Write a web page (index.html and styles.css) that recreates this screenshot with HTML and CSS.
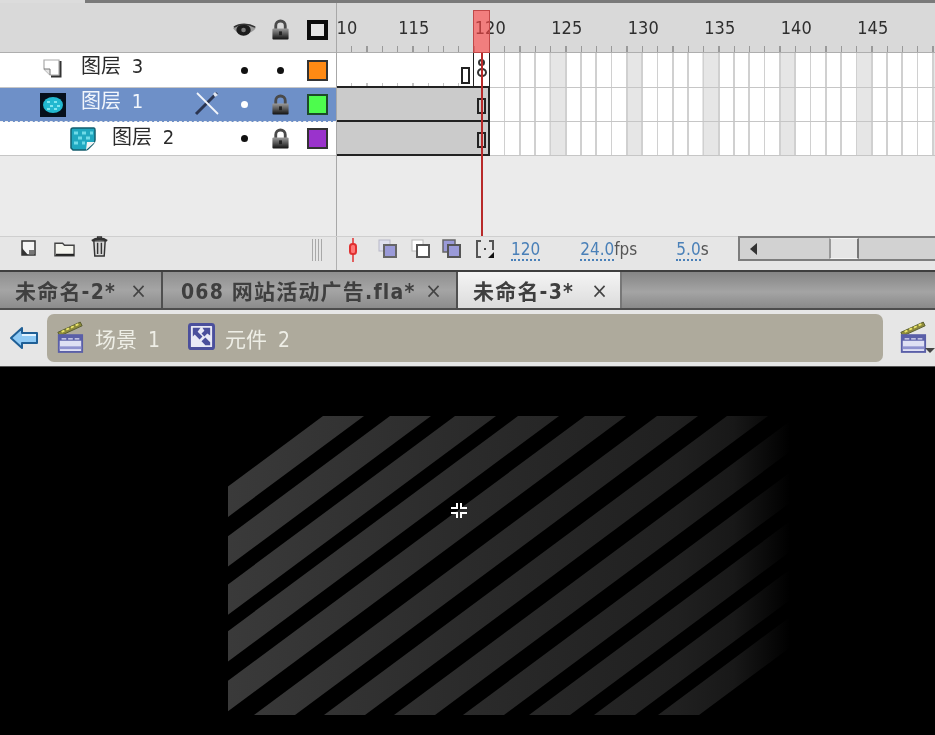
FILE: index.html
```html
<!DOCTYPE html>
<html lang="zh">
<head>
<meta charset="utf-8">
<title>Timeline</title>
<link rel="stylesheet" href="styles.css">
</head>
<body>
<svg class="defs" width="0" height="0" aria-hidden="true">
  <defs>
    <linearGradient id="lockg" x1="0" y1="0" x2="0" y2="1"><stop offset="0" stop-color="#9a9a9a"/><stop offset="1" stop-color="#111"/></linearGradient>
    <symbol id="lock" viewBox="0 0 20 22">
      <path d="M5 11V7a5 5 0 0 1 10 0v4" fill="none" stroke="#4a4a4a" stroke-width="3"/>
      <rect x="1.500" y="10" width="17" height="11.500" rx="1" fill="url(#lockg)"/>
      <rect x="8.500" y="13" width="3" height="4" fill="#222"/>
    </symbol>
    <symbol id="clapper" viewBox="0 0 30 34">
      <path d="M2 12 26 1l2 4L4 16z" fill="#8d8a3c" stroke="#555a2c"/>
      <path d="M6 11.500l3-1.400M11 9.200l3-1.400M16 6.900l3-1.400M21 4.600l3-1.400" stroke="#e9e36a" stroke-width="2"/>
      <rect x="3" y="15" width="25" height="18" fill="#dfe0f4" stroke="#5a5fa8" stroke-width="2"/>
      <rect x="3" y="15" width="25" height="6" fill="#5a5fa8"/>
      <path d="M6 19h5M13 19h5M20 19h5" stroke="#dfe0f4" stroke-width="1.500"/>
      <rect x="4" y="27" width="23" height="3" fill="#8f92cf"/>
    </symbol>
    <symbol id="onion-a" viewBox="0 0 20 20">
      <rect x="1" y="1" width="11" height="11" fill="#dfe0ee" stroke="#b8b8c8"/>
      <rect x="6" y="6" width="12" height="12" fill="#9a9ad8" stroke="#666"  stroke-width="2"/>
    </symbol>
    <symbol id="onion-b" viewBox="0 0 20 20">
      <rect x="1" y="1" width="11" height="11" fill="#fff" stroke="#b8b8b8"/>
      <rect x="6" y="6" width="12" height="12" fill="#fff" stroke="#555" stroke-width="2"/>
    </symbol>
    <symbol id="onion-c" viewBox="0 0 20 20">
      <rect x="1" y="1" width="12" height="12" fill="#9a9ad8" stroke="#666" stroke-width="1.500"/>
      <rect x="6" y="6" width="12" height="12" fill="#9a9ad8" stroke="#555" stroke-width="2"/>
    </symbol>
  </defs>
</svg>

<div class="app">
  <div class="topline"></div>
  <section class="timeline">
    <div class="layers">
      <div class="layer-head">
        <span class="cell">
          <svg class="ico-eye" viewBox="0 0 24 16"><path d="M0 6C5 1 18 0 24 5c-3 7-17 11-24 1z" fill="#9a9a9a"/><ellipse cx="11" cy="8" rx="7.500" ry="6" fill="#1c1c1c"/><circle cx="11" cy="8" r="2.400" fill="#7a7a7a"/><path d="M1 5c6-4 15-4 22 0" fill="none" stroke="#333" stroke-width="1.800"/></svg>
        </span>
        <span class="cell"><svg class="ico-lock"><use href="#lock"/></svg></span>
        <span class="cell"><span class="outline-box"></span></span>
      </div>

      <div class="layer-row first">
        <div class="name-cell ind-mask">
          <svg class="ico-mask" viewBox="0 0 20 20"><path d="M1 2h15v15H7L1 11z" fill="#fff" stroke="#aaa" stroke-width="1.200"/><path d="M1 11h6v6" fill="#e4e4e4" stroke="#777"/><path d="M17.500 3v15.500H8" fill="none" stroke="#333" stroke-width="2"/></svg>
          <span class="lname">图层 3</span>
        </div>
        <span class="cell"><i class="dot"></i></span>
        <span class="cell"><i class="dot"></i></span>
        <span class="cell"><span class="swatch orange"></span></span>
      </div>

      <div class="layer-row active">
        <div class="name-cell ind-masked">
          <svg class="ico-masked" viewBox="0 0 26 24"><rect width="26" height="24" fill="#06101c"/><ellipse cx="13" cy="12" rx="10" ry="8" fill="#22b8d0"/><path d="M7 9h3M14 9h3M10 13h3M17 13h3M7 16h3M14 16h3" stroke="#7fe6f0" stroke-width="2"/></svg>
          <span class="lname">图层 1</span>
          <svg class="ico-pencil" viewBox="0 0 26 26"><path d="M2 24 23 3" stroke="#2b3550" stroke-width="3"/><path d="M21 2l3 3-3 2-2-3z" fill="#dfe6f2"/><path d="M3 3l21 21" stroke="#f3f6fb" stroke-width="1.800"/></svg>
        </div>
        <span class="cell"><i class="dot light"></i></span>
        <span class="cell"><svg class="ico-lock"><use href="#lock"/></svg></span>
        <span class="cell"><span class="swatch green"></span></span>
      </div>

      <div class="layer-row">
        <div class="name-cell ind-child">
          <svg class="ico-child" viewBox="0 0 26 24"><path d="M1 3q0-2 2-2h21q1 0 1 2v10q0 2-2 4l-5 5q-1 1-3 1H3l-2-2z" fill="#20a8c0" stroke="#155e6e" stroke-width="1.500"/><path d="M4 6h4M12 6h4M20 6h3M8 11h4M16 11h4M4 16h4M12 16h3" stroke="#6fdbe8" stroke-width="3"/><path d="M16 23l1-8h8z" fill="#f4f4f4"/></svg>
          <span class="lname">图层 2</span>
        </div>
        <span class="cell"><i class="dot"></i></span>
        <span class="cell"><svg class="ico-lock"><use href="#lock"/></svg></span>
        <span class="cell"><span class="swatch purple"></span></span>
      </div>
      <div class="layer-empty"></div>
    </div>

    <div class="frames">
      <div class="ruler">
        <span class="tick-label shift">110</span>
        <span class="tick-label">115</span>
        <span class="tick-label">120</span>
        <span class="tick-label">125</span>
        <span class="tick-label">130</span>
        <span class="tick-label">135</span>
        <span class="tick-label">140</span>
        <span class="tick-label">145</span>
        <span class="tick-label">150</span>
      </div>
      <div class="frame-row first">
        <div class="span-blank"><i class="kf-empty"></i></div>
        <div class="span-cell"><i class="ring small"></i><i class="ring"></i></div>
      </div>
      <div class="frame-row">
        <div class="span-tween"><i class="kf-end"></i></div>
      </div>
      <div class="frame-row">
        <div class="span-tween"><i class="kf-end"></i></div>
      </div>
      <div class="frames-empty"></div>
      <div class="playhead"><div class="ph-head"></div><div class="ph-line"></div></div>
    </div>
  </section>

  <section class="toolbar">
    <div class="tool-left">
      <svg class="ico-new" viewBox="0 0 18 18"><path d="M2 2h13v14H2z" fill="#f4f4f4" stroke="#333" stroke-width="1.500"/><path d="M2 9l6 7H2z" fill="#333"/><path d="M9 11h5v4H9z" fill="#777"/></svg>
      <svg class="ico-folder" viewBox="0 0 22 16"><path d="M1 2h8l2 2h10v11H1z" fill="#f4f4ee" stroke="#444" stroke-width="1.500"/><path d="M2 14h19" stroke="#222" stroke-width="2"/></svg>
      <svg class="ico-trash" viewBox="0 0 18 22"><path d="M3 5h12l-1 16H4z" fill="#d8d8d8" stroke="#333" stroke-width="1.500"/><path d="M1 5c4-3 12-3 16 0" fill="none" stroke="#333" stroke-width="2.500"/><path d="M7 1h4v2H7zM7 7v12M11 7v12" fill="none" stroke="#333" stroke-width="1.500"/></svg>
      <span class="grip"></span>
    </div>
    <div class="tool-right">
      <svg class="ico-marker" viewBox="0 0 8 24"><path d="M4 0v24" stroke="#e03030" stroke-width="1.500"/><rect x="1" y="6" width="6" height="10" rx="2.500" fill="#f77" stroke="#e03030" stroke-width="2"/></svg>
      <svg class="ico-onion a"><use href="#onion-a"/></svg>
      <svg class="ico-onion b"><use href="#onion-b"/></svg>
      <svg class="ico-onion c"><use href="#onion-c"/></svg>
      <svg class="ico-brackets" viewBox="0 0 20 20"><path d="M6 2H2v16h4M14 2h4v9" fill="none" stroke="#555" stroke-width="2"/><rect x="9" y="9" width="2" height="2" fill="#444"/><path d="M19 13v6h-6z" fill="#111"/></svg>
      <span class="stat s-frame"><b class="val">120</b></span>
      <span class="stat s-fps"><b class="val">24.0</b>fps</span>
      <span class="stat s-time"><b class="val">5.0</b>s</span>
      <div class="hscroll">
        <span class="sc-arrow"></span>
        <span class="sc-thumb"></span>
      </div>
    </div>
  </section>

  <nav class="tabs">
    <div class="tab t1"><span>未命名-2*</span><span class="x">×</span></div>
    <div class="tab t2"><span>068 网站活动广告.fla*</span><span class="x">×</span></div>
    <div class="tab t3 on"><span>未命名-3*</span><span class="x">×</span></div>
  </nav>

  <div class="navbar">
    <svg class="ico-back" viewBox="0 0 28 22"><path d="M12 1 1 11l11 10v-5h15V6H12z" fill="#8fcaf5" stroke="#1f5f96" stroke-width="2" stroke-linejoin="round"/><path d="M12 8h14" stroke="#e4f4ff" stroke-width="2"/></svg>
    <div class="crumbs">
      <svg class="ico-clap"><use href="#clapper"/></svg>
      <span class="crumb">场景 1</span>
      <svg class="ico-symbol" viewBox="0 0 28 28"><rect x="1.500" y="1.500" width="25" height="25" rx="2" fill="#e9e9f6" stroke="#4b4f9c" stroke-width="3"/><path d="M5 5h8l-3 4 5 5-3 3-5-5-2 2zM23 5v8l-3-2-3 3-3-3 3-3-2-3zM14 19l4-4 5 5v3h-5z" fill="#4b4f9c"/></svg>
      <span class="crumb">元件 2</span>
    </div>
    <div class="nav-right">
      <svg class="ico-clap"><use href="#clapper"/></svg>
      <span class="caret"></span>
    </div>
  </div>

  <main class="stage">
    <svg class="canvas" viewBox="0 366 935 369">
      <defs>
        <linearGradient id="fade" gradientUnits="userSpaceOnUse" x1="228" y1="0" x2="790" y2="0">
          <stop offset="0" stop-color="#3a3a3a"/>
          <stop offset=".42" stop-color="#2b2b2b"/>
          <stop offset=".8" stop-color="#202020"/>
          <stop offset=".9" stop-color="#181818"/>
          <stop offset="1" stop-color="#000"/>
        </linearGradient>
        <clipPath id="box"><rect x="228" y="415" width="562" height="299"/></clipPath>
      </defs>
      <g fill="url(#fade)" clip-path="url(#box)">
        <polygon points="323,415 364,415 -39,714 -80,714"/>
        <polygon points="390,415 431,415 28,714 -13,714"/>
        <polygon points="455,415 496,415 93,714 52,714"/>
        <polygon points="518,415 559,415 156,714 115,714"/>
        <polygon points="585,415 626,415 223,714 182,714"/>
        <polygon points="657,415 698,415 295,714 254,714"/>
        <polygon points="727,415 768,415 365,714 324,714"/>
        <polygon points="797,415 838,415 435,714 394,714"/>
        <polygon points="866,415 907,415 504,714 463,714"/>
        <polygon points="932,415 973,415 570,714 529,714"/>
        <polygon points="997,415 1038,415 635,714 594,714"/>
        <polygon points="1061,415 1102,415 699,714 658,714"/>
      </g>
      <path fill="#fff" d="M451 506h5v-4h2v6h-7zM460 502h2v4h5v2h-7zM451 511h7v6h-2v-4h-5zM460 511h7v2h-5v4h-2z"/>
    </svg>
  </main>
</div>
</body>
</html>
```

FILE: styles.css
```css
* { box-sizing: border-box; }
html, body { margin: 0; padding: 0; height: 100%; background: #000; overflow: hidden; }
.defs { position: absolute; }
.app {
  width: 935px;
  height: 735px;
  display: flex;
  flex-direction: column;
  overflow: hidden;
  filter: blur(0.45px);
  font-family: "DejaVu Sans", "Noto Sans CJK SC", sans-serif;
  font-stretch: condensed;
  color: #2a2a2a;
}

.topline {
  height: 3px;
  flex: none;
  background: linear-gradient(90deg, #dcdcdc 0 85px, #7a7a7a 85px);
}

/* timeline */
.timeline {
  height: 233px;
  flex: none;
  display: grid;
  grid-template-columns: 337px 1fr;
}
.layers {
  display: flex;
  flex-direction: column;
  border-right: 1px solid #a8a8a8;
  background: #ebebeb;
}
.layer-head {
  height: 50px;
  flex: none;
  display: flex;
  justify-content: flex-end;
  background: #d9d9d9;
  border-bottom: 1px solid #aeaeae;
  padding-top: 4px;
}
.cell {
  width: 36px;
  flex: none;
  display: flex;
  align-items: center;
  justify-content: center;
}
.cell:last-child { width: 38px; }
.layer-row {
  height: 34px;
  flex: none;
  display: flex;
  background: #fff;
  border-bottom: 1px solid #c6c6c6;
}
.layer-row.first { height: 35px; }
.layer-row.active {
  background: #6e90c8;
  border-bottom: 1px dashed #f0f0f0;
  color: #f2f6fc;
}
.name-cell {
  width: 226px;
  flex: none;
  display: flex;
  align-items: center;
}
.ind-mask { padding-left: 43px; }
.ind-masked { padding-left: 40px; }
.ind-child { padding-left: 70px; }
.lname {
  font-size: 20px;
  line-height: 1;
  position: relative;
  top: -4px;
  word-spacing: 5px;
  white-space: pre;
}
.ind-mask .lname { margin-left: 18px; }
.ind-masked .lname { margin-left: 15px; }
.ind-child .lname { margin-left: 16px; top: -2px; }

.ico-eye { width: 23px; height: 16px; }
.ico-lock { width: 19px; height: 21px; }
.outline-box {
  width: 21px;
  height: 20px;
  border: 4px solid #0c0c0c;
  background: #e4e4e4;
  margin-left: 1px;
}
.ico-mask { width: 20px; height: 20px; margin-top: -4px; }
.ico-masked { width: 26px; height: 24px; }
.ico-child { width: 26px; height: 24px; }
.ico-pencil { width: 26px; height: 26px; margin-left: 51px; margin-top: -4px; }
.dot { width: 7px; height: 7px; border-radius: 50%; background: #111; }
.dot.light { background: #fff; }
.swatch {
  width: 21px;
  height: 21px;
  margin-left: 1px;
  border: 2px solid #333;
}
.swatch.orange { background: #ff8a14; }
.swatch.green { background: #4dfc4d; border-color: #1c4a28; }
.swatch.purple { background: #9a33cc; }
.layer-empty { flex: 1; }

/* frames */
.frames {
  position: relative;
  display: flex;
  flex-direction: column;
  overflow: hidden;
  background-color: #fff;
}
.ruler {
  height: 50px;
  flex: none;
  display: flex;
  overflow: hidden;
  background:
    repeating-linear-gradient(90deg, transparent 0 14px, #9a9a9a 14px 15.3px) 0 43px / 100% 6px no-repeat,
    #d9d9d9;
  border-bottom: 1px solid #aeaeae;
  padding-top: 14px;
}
.tick-label {
  flex: 0 0 76.5px;
  text-align: center;
  font-size: 18px;
  line-height: 22px;
  color: #2e2e2e;
}
.tick-label.shift { flex-basis: 67.5px; margin-left: -29px; }
.frame-row {
  height: 34px;
  flex: none;
  display: flex;
  border-bottom: 1px solid #c6c6c6;
  background:
    repeating-linear-gradient(90deg, transparent 0 13.6px, #d0d0d0 13.6px 15.3px),
    repeating-linear-gradient(90deg, transparent 0 59.5px, #e6e6e6 59.5px 75px, transparent 75px 76.5px);
}
.frame-row.first { height: 35px; }
.span-blank {
  width: 136px;
  flex: none;
  display: flex;
  justify-content: flex-end;
  align-items: flex-end;
  background:
    repeating-linear-gradient(90deg, transparent 0 14px, #c4c4c4 14px 15.3px) 0 100% / 100% 3px no-repeat,
    #fff;
  border-bottom: 2px solid #222;
  margin-bottom: -1px;
  padding: 0 3px 2px 0;
}
.kf-empty {
  width: 9px;
  height: 17px;
  border: 2px solid #222;
  background: #fff;
}
.span-cell {
  width: 17px;
  flex: none;
  display: flex;
  flex-direction: column;
  align-items: center;
  gap: 2px;
  padding-top: 6px;
  background: #fff;
  border: 1px solid #222;
  border-top: 0;
  border-bottom-width: 2px;
  margin-bottom: -1px;
}
.ring { width: 10px; height: 9px; border: 2px solid #333; border-radius: 50%; }
.ring.small { width: 7px; height: 7px; }
.span-tween {
  width: 153px;
  flex: none;
  display: flex;
  justify-content: flex-end;
  align-items: center;
  padding: 4px 2px 0 0;
  background: #cbcbcb;
  border-right: 2px solid #222;
  border-bottom: 2px solid #222;
  margin-bottom: -1px;
}
.kf-end {
  width: 9px;
  height: 16px;
  border: 2px solid #222;
  background: transparent;
}
.frames-empty { flex: 1; background: #ebebeb; }
.playhead {
  position: absolute;
  left: 136px;
  top: 7px;
  bottom: 0;
  width: 17px;
  display: flex;
  flex-direction: column;
  align-items: center;
}
.ph-head {
  width: 17px;
  height: 43px;
  flex: none;
  background: rgba(255, 70, 70, 0.62);
  border: 1px solid #c04848;
}
.ph-line { width: 2px; flex: 1; background: #b82a2a; }

/* toolbar */
.toolbar {
  height: 34px;
  flex: none;
  display: flex;
  background: #e6e6e6;
  border-top: 1px solid #cfcfcf;
}
.tool-left {
  width: 337px;
  flex: none;
  display: flex;
  align-items: flex-start;
  padding-top: 2px;
  border-right: 1px solid #b0b0b0;
  padding-left: 20px;
}
.ico-new { width: 18px; height: 18px; }
.ico-folder { width: 21px; height: 16px; margin-left: 16px; margin-top: 2px; }
.ico-trash { width: 17px; height: 21px; margin-left: 16px; margin-top: -3px; }
.grip {
  width: 12px;
  height: 22px;
  margin-left: 204px;
  background: repeating-linear-gradient(90deg, #a8a8a8 0 1px, transparent 1px 3px);
}
.tool-right {
  flex: 1;
  min-width: 0;
  display: flex;
  align-items: flex-start;
  padding-left: 12px;
}
.ico-marker { width: 8px; height: 24px; flex: none; margin-top: 1px; }
.ico-onion { width: 20px; height: 20px; flex: none; margin-top: 2px; }
.ico-onion.a { margin-left: 21px; }
.ico-onion.b { margin-left: 13px; }
.ico-onion.c { margin-left: 11px; }
.ico-brackets { width: 20px; height: 20px; flex: none; margin-left: 13px; margin-top: 2px; }
.stat { font-size: 17px; line-height: 20px; flex: none; color: #555; margin-top: 2px; }
.stat .val {
  font-weight: normal;
  color: #4a80b8;
  border-bottom: 2px dotted #4a80b8;
  display: inline-block;
}
.s-frame { margin-left: 16px; }
.s-fps { margin-left: 40px; }
.s-time { margin-left: 39px; }
.hscroll {
  flex: 1;
  min-width: 0;
  height: 25px;
  margin: -1px -4px 0 29px;
  display: flex;
  align-items: stretch;
  background: #d2d2d2;
  border: 2px solid #7d7d7d;
  padding-left: 10px;
}
.sc-arrow {
  width: 0;
  height: 0;
  align-self: center;
  border: 6px solid transparent;
  border-left-width: 0;
  border-right: 7px solid #333;
}
.sc-thumb {
  width: 30px;
  flex: none;
  margin-left: 72px;
  background: #e6e6e6;
  border: 1px solid #f4f4f4;
  border-right: 2px solid #777;
  border-left: 2px solid #999;
}

/* tabs */
.tabs {
  height: 40px;
  flex: none;
  display: flex;
  background: linear-gradient(#858585, #a4a4a4 55%, #8a8a8a);
  border-top: 2px solid #3e3e3e;
  border-bottom: 2px solid #4d4d4d;
}
.tab {
  display: flex;
  align-items: center;
  justify-content: space-between;
  font-size: 21px;
  letter-spacing: 1.2px;
  font-weight: bold;
  color: #3f3f3f;
  padding: 0 13px 0 16px;
  background: linear-gradient(#8f8f8f, #a5a5a5 50%, #8c8c8c);
  border-right: 2px solid #4f4f4f;
  white-space: pre;
}
.tab.t1 { width: 163px; padding-left: 15px; }
.tab.t2 { width: 295px; padding-left: 18px; }
.tab.t3 { width: 164px; padding-left: 15px; padding-right: 11px; }
.tab.on { background: linear-gradient(#f4f4f4, #dcdcdc); border-right-color: #777; }
.x { font-weight: normal; font-size: 22px; color: #444; }

/* navigation */
.navbar {
  height: 57px;
  flex: none;
  display: flex;
  align-items: center;
  background: #e6e6e6;
  padding-left: 10px;
  border-bottom: 1px solid #555;
}
.ico-back { width: 28px; height: 22px; flex: none; }
.crumbs {
  width: 836px;
  height: 48px;
  flex: none;
  margin-left: 9px;
  display: flex;
  align-items: center;
  background: #aeaa9c;
  border-radius: 7px;
  padding-left: 9px;
}
.ico-clap { width: 28px; height: 32px; flex: none; margin-top: -2px; }
.crumb { font-size: 21px; color: #eeeee6; margin-left: 11px; word-spacing: 5px; white-space: pre; }
.ico-symbol { width: 27px; height: 27px; flex: none; margin-left: 28px; margin-top: -3px; }
.crumbs .ico-symbol + .crumb { margin-left: 10px; }
.nav-right { display: flex; align-items: flex-end; margin-left: 16px; flex: none; }
.caret {
  width: 0;
  height: 0;
  border: 5px solid transparent;
  border-top-color: #444;
  border-bottom-width: 0;
  margin-left: -2px;
}

/* stage */
.stage { flex: 1; min-height: 0; background: #000; }
.canvas { display: block; width: 935px; height: 369px; }
```
